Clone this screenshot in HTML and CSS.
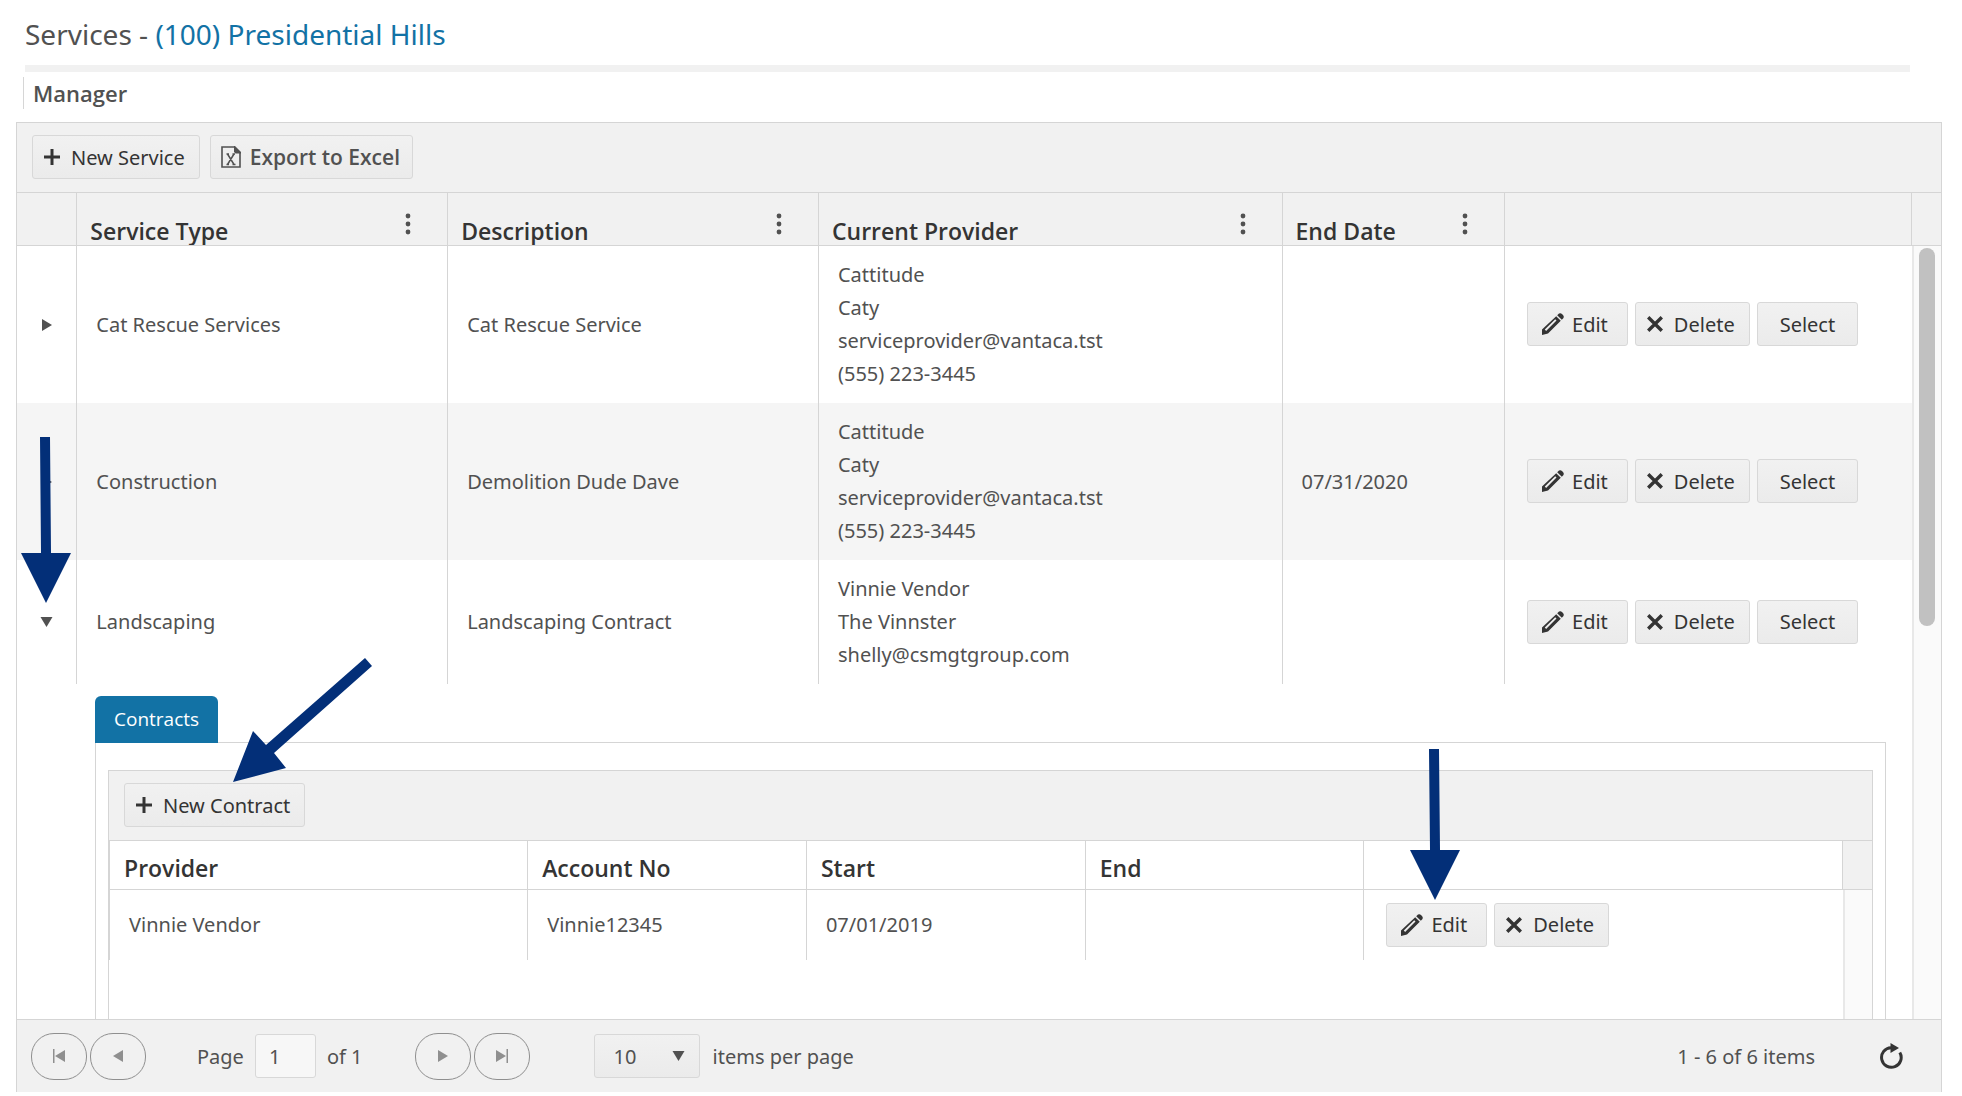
FILE: index.html
```html
<!DOCTYPE html>
<html lang="en">
<head>
  <meta charset="UTF-8">
  <meta name="viewport" content="width=device-width, initial-scale=1.0">
  <title>Services - (100) Presidential Hills</title>
  <link rel="stylesheet" href="styles.css">
</head>
<body>
  <!-- shared icons -->
  <svg class="sprite" aria-hidden="true">
    <symbol id="i-plus" viewBox="0 0 16 16"><path d="M6.5 0h3v6.5H16v3H9.5V16h-3V9.5H0v-3h6.5z"/></symbol>
    <symbol id="i-x" viewBox="0 0 16 16"><path d="M1.2 1.2 14.8 14.8M14.8 1.2 1.2 14.8" fill="none" stroke="currentColor" stroke-width="3.4"/></symbol>
    <symbol id="i-pencil" viewBox="0 0 22 22">
      <path fill-rule="evenodd" d="M14.2 3.2 18.8 7.800 6 20.500 0 22V16.500zM13.200 6.200 2.800 16.600l1.300 1.300L14.500 7.500z"/>
      <path d="M15.200 2.200 17 .600Q18.600-.5 20.200 1.200L21 2Q22.400 3.700 21.300 5.200L19.800 6.800z"/>
    </symbol>
    <symbol id="i-excel" viewBox="0 0 20 22">
      <path d="M13 1H1v20h18V7" fill="none" stroke="currentColor" stroke-width="1.600"/>
      <path d="M13 0h1l6 6v1.500h-5.500L13 6z"/>
      <path d="M6.500 8 13 18.500M13 8 6.500 18.500M5.500 8h2.500M11.500 8H14M5.500 18.500H8M11.500 18.500h3" fill="none" stroke="currentColor" stroke-width="1.500"/>
    </symbol>
    <symbol id="i-dots" viewBox="0 0 6 22"><circle cx="3" cy="3" r="2.400"/><circle cx="3" cy="11" r="2.400"/><circle cx="3" cy="19" r="2.400"/></symbol>
    <symbol id="i-right" viewBox="0 0 10 12"><path d="M0 0 10 6 0 12z"/></symbol>
    <symbol id="i-left" viewBox="0 0 10 12"><path d="M10 0 0 6 10 12z"/></symbol>
    <symbol id="i-down" viewBox="0 0 12 10"><path d="M0 0h12L6 10z"/></symbol>
    <symbol id="i-first" viewBox="0 0 12 14"><path d="M0 0h1.500v14H0zM12 1v12L2 7z"/></symbol>
    <symbol id="i-last" viewBox="0 0 12 14"><path d="M10.500 0H12v14h-1.500zM0 1v12l10-6z"/></symbol>
    <symbol id="i-refresh" viewBox="0 0 24 26">
      <path d="M20.800 9.500A9.800 9.800 0 1 1 12 4.700" fill="none" stroke="currentColor" stroke-width="3"/>
      <path d="M11.500 0 20 5l-8.500 5z"/>
    </symbol>
  </svg>

  <header class="page-header">
    <h1>Services - <a href="#">(100) Presidential Hills</a></h1>
  </header>
  <h2 class="section-title">Manager</h2>

  <main class="grid">
    <div class="toolbar">
      <button type="button" class="btn"><svg class="icon"><use href="#i-plus"/></svg>New Service</button>
      <button type="button" class="btn btn-export"><svg class="icon icon-excel"><use href="#i-excel"/></svg>Export to Excel</button>
    </div>

    <div class="grid-header">
      <table class="services">
        <colgroup><col class="w-arrow"><col class="w-type"><col class="w-desc"><col class="w-provider"><col class="w-date"><col class="w-cmd"></colgroup>
        <thead>
          <tr>
            <th></th>
            <th>Service Type<svg class="dots"><use href="#i-dots"/></svg></th>
            <th>Description<svg class="dots"><use href="#i-dots"/></svg></th>
            <th>Current Provider<svg class="dots"><use href="#i-dots"/></svg></th>
            <th>End Date<svg class="dots"><use href="#i-dots"/></svg></th>
            <th></th>
          </tr>
        </thead>
      </table>
    </div>

    <div class="grid-body">
      <div class="grid-scroll">
        <table class="services">
          <colgroup><col class="w-arrow"><col class="w-type"><col class="w-desc"><col class="w-provider"><col class="w-date"><col class="w-cmd"></colgroup>
          <tbody>
            <tr>
              <td class="toggle"><button type="button" aria-label="Expand"><svg class="tri"><use href="#i-right"/></svg></button></td>
              <td>Cat Rescue Services</td>
              <td>Cat Rescue Service</td>
              <td>Cattitude<br>Caty<br>serviceprovider@vantaca.tst<br>(555) 223-3445</td>
              <td></td>
              <td>
                <div class="commands">
                  <button type="button" class="btn btn-edit"><svg class="icon icon-pencil"><use href="#i-pencil"/></svg>Edit</button>
                  <button type="button" class="btn"><svg class="icon"><use href="#i-x"/></svg>Delete</button>
                  <button type="button" class="btn btn-select">Select</button>
                </div>
              </td>
            </tr>
            <tr class="alt">
              <td class="toggle"><button type="button" aria-label="Expand"><svg class="tri"><use href="#i-right"/></svg></button></td>
              <td>Construction</td>
              <td>Demolition Dude Dave</td>
              <td>Cattitude<br>Caty<br>serviceprovider@vantaca.tst<br>(555) 223-3445</td>
              <td>07/31/2020</td>
              <td>
                <div class="commands">
                  <button type="button" class="btn btn-edit"><svg class="icon icon-pencil"><use href="#i-pencil"/></svg>Edit</button>
                  <button type="button" class="btn"><svg class="icon"><use href="#i-x"/></svg>Delete</button>
                  <button type="button" class="btn btn-select">Select</button>
                </div>
              </td>
            </tr>
            <tr>
              <td class="toggle"><button type="button" aria-label="Collapse"><svg class="tri-down"><use href="#i-down"/></svg></button></td>
              <td>Landscaping</td>
              <td>Landscaping Contract</td>
              <td>Vinnie Vendor<br>The Vinnster<br>shelly@csmgtgroup.com</td>
              <td></td>
              <td>
                <div class="commands">
                  <button type="button" class="btn btn-edit"><svg class="icon icon-pencil"><use href="#i-pencil"/></svg>Edit</button>
                  <button type="button" class="btn"><svg class="icon"><use href="#i-x"/></svg>Delete</button>
                  <button type="button" class="btn btn-select">Select</button>
                </div>
              </td>
            </tr>
          </tbody>
        </table>

        <section class="detail">
          <button type="button" class="tab">Contracts</button>
          <div class="tab-content">
            <div class="subgrid">
              <div class="toolbar">
                <button type="button" class="btn"><svg class="icon"><use href="#i-plus"/></svg>New Contract</button>
              </div>
              <div class="subgrid-header">
                <table class="contracts">
                  <colgroup><col class="c-provider"><col class="c-field"><col class="c-field"><col class="c-field"><col class="c-cmd"></colgroup>
                  <thead>
                    <tr><th>Provider</th><th>Account No</th><th>Start</th><th>End</th><th></th></tr>
                  </thead>
                </table>
              </div>
              <div class="subgrid-body">
                <div class="subgrid-scroll">
                  <table class="contracts">
                    <colgroup><col class="c-provider"><col class="c-field"><col class="c-field"><col class="c-field"><col class="c-cmd"></colgroup>
                    <tbody>
                      <tr>
                        <td>Vinnie Vendor</td>
                        <td>Vinnie12345</td>
                        <td>07/01/2019</td>
                        <td></td>
                        <td>
                          <div class="commands">
                            <button type="button" class="btn btn-edit"><svg class="icon icon-pencil"><use href="#i-pencil"/></svg>Edit</button>
                            <button type="button" class="btn"><svg class="icon"><use href="#i-x"/></svg>Delete</button>
                          </div>
                        </td>
                      </tr>
                    </tbody>
                  </table>
                </div>
                <div class="track"></div>
              </div>
            </div>
          </div>
        </section>
      </div>
      <div class="track"><div class="thumb"></div></div>
    </div>

    <div class="pager">
      <div class="pager-nav">
        <button type="button" aria-label="First page"><svg class="nav-end"><use href="#i-first"/></svg></button>
        <button type="button" aria-label="Previous page"><svg class="tri"><use href="#i-left"/></svg></button>
      </div>
      <label class="pager-page">Page <input type="text" value="1"> of 1</label>
      <div class="pager-nav">
        <button type="button" aria-label="Next page"><svg class="tri"><use href="#i-right"/></svg></button>
        <button type="button" aria-label="Last page"><svg class="nav-end"><use href="#i-last"/></svg></button>
      </div>
      <label class="pager-size">
        <span class="select-wrap">
          <select><option>10</option><option>20</option><option>50</option></select>
          <svg class="tri-down"><use href="#i-down"/></svg>
        </span>
        items per page
      </label>
      <span class="pager-info">1 - 6 of 6 items</span>
      <button type="button" class="refresh" aria-label="Refresh"><svg><use href="#i-refresh"/></svg></button>
    </div>
  </main>

  <!-- callout arrows over the grid -->
  <svg class="callout callout-expand" viewBox="0 0 50 166"><path d="M19 0h10l1 116h20L25 166 0 116h20z"/></svg>
  <svg class="callout callout-new" viewBox="0 0 140 124"><path d="M132 0l7 8-98 87 12 15L0 124 20 73l13 14z"/></svg>
  <svg class="callout callout-edit" viewBox="0 0 50 151"><path d="M19 0h10l1 101h20L25 151 0 101h20z"/></svg>
</body>
</html>
```
FILE: styles.css
```css
* {
  box-sizing: border-box;
}
body {
  font-family: 'Noto Sans', 'Open Sans', sans-serif;
  font-size: 20px;
  line-height: 33px;
  margin: 0;
  padding: 0 20px 4px 16px;
  height: 100vh;
  display: flex;
  flex-direction: column;
  background: #fff;
  color: #515151;
  position: relative;
}
svg {
  display: block;
  flex: none;
  fill: currentColor;
}
.sprite {
  display: none;
}
button, input, select {
  font: inherit;
  color: inherit;
}

/* page heading */
.page-header {
  margin: 0 32px 0 9px;
  padding: 14px 0 11px;
  border-bottom: 7px solid #f1f1f1;
}
h1 {
  margin: 0;
  font-size: 28px;
  line-height: 40px;
  font-weight: 400;
}
h1 a {
  color: #1272a5;
  text-decoration: none;
}
.section-title, .btn-export, .tab, th {
  font-family: 'Open Sans', 'Noto Sans', sans-serif;
  font-weight: 600;
}
.section-title {
  margin: 5px 0 13px 7px;
  padding-left: 9px;
  border-left: 1px solid #d6d6d6;
  font-size: 22px;
  line-height: 32px;
}

/* grid */
.grid {
  flex: 1;
  min-height: 0;
  display: flex;
  flex-direction: column;
  border: 1px solid #d5d5d5;
  border-bottom: 0;
}
.toolbar {
  display: flex;
  gap: 10px;
  padding: 12px 15px 13px;
  background: #f1f1f1;
  border-bottom: 1px solid #d5d5d5;
}
.btn {
  display: flex;
  align-items: center;
  justify-content: center;
  gap: 11px;
  height: 44px;
  padding: 0 14px 0 11px;
  border: 1px solid #d8d8d8;
  border-radius: 3px;
  background: linear-gradient(#f1f1f1, #ebebeb);
  color: #343434;
  white-space: nowrap;
}
.btn-export {
  gap: 9px;
  padding: 0 12px 0 10px;
  font-size: 21px;
  color: #515151;
}
.btn-edit {
  gap: 8px;
  padding: 0 19px 0 14px;
}
.btn-select {
  padding: 0 22px;
}
.icon {
  width: 16px;
  height: 16px;
}
.icon-pencil {
  width: 22px;
  height: 22px;
}
.icon-excel {
  width: 20px;
  height: 22px;
}
table {
  width: 100%;
  table-layout: fixed;
  border-collapse: separate;
  border-spacing: 0;
}
th, td {
  border-left: 1px solid #d5d5d5;
  text-align: left;
}
th {
  font-size: 23px;
  color: #343434;
}
td {
  padding: 12px 18px 13px 19px;
}
.services tr > :first-child {
  border-left: 0;
}
.w-arrow { width: 32px; }
.w-type, .w-desc { width: 200px; }
.w-provider { width: 250px; }
.w-date { width: 120px; }
.w-cmd { width: 220px; }

.grid-header {
  flex: none;
  height: 53px;
  overflow: hidden;
  padding-right: 29px;
  background: #f1f1f1;
  border-bottom: 1px solid #d5d5d5;
}
.grid-header th {
  position: relative;
  height: 55px;
  padding: 22px 13px 0;
}
.grid-header th:last-child {
  border-right: 1px solid #d5d5d5;
}
.dots {
  position: absolute;
  top: 20px;
  right: 36px;
  width: 6px;
  height: 22px;
  color: #515151;
}
.grid-body {
  flex: 1;
  min-height: 0;
  display: flex;
}
.grid-scroll {
  flex: 1;
  min-width: 0;
  overflow: hidden;
}
.alt {
  background: #f5f5f5;
}
.services td:last-child {
  padding-left: 22px;
}
.services .toggle {
  padding: 0;
}
.toggle button {
  display: flex;
  margin: 0 auto;
  padding: 0;
  border: 0;
  background: none;
}
.tri {
  width: 10px;
  height: 14px;
}
.tri-down {
  width: 13px;
  height: 10px;
}
.commands {
  display: flex;
  gap: 7px;
}
.track {
  flex: none;
  width: 29px;
  padding: 2px 6px 0 5px;
  background: #fafafa;
  border-left: 2px solid #e8e8e8;
}
.thumb {
  height: 49%;
  border-radius: 8px;
  background: #c1c1c1;
}

/* contracts detail */
.detail {
  padding: 12px 26px 0 78px;
}
.tab {
  display: block;
  height: 47px;
  margin: 0 0 -1px;
  padding: 0 19px;
  position: relative;
  border: 0;
  border-radius: 6px 6px 0 0;
  background: #1272a5;
  color: #fff;
  font-size: 19px;
  font-weight: 500;
}
.tab-content {
  padding: 27px 12px 12px;
  border: 1px solid #d5d5d5;
}
.subgrid {
  border: 1px solid #d5d5d5;
}
.subgrid-header {
  padding-right: 29px;
  background: #f1f1f1;
  border-bottom: 1px solid #d5d5d5;
}
.subgrid-header th {
  height: 48px;
  padding: 6px 14px 0;
  background: #fff;
}
.subgrid-header th:last-child {
  border-right: 1px solid #d5d5d5;
}
.subgrid-body {
  display: flex;
  height: 250px;
}
.subgrid-scroll {
  flex: 1;
}
.contracts td {
  height: 70px;
}
.contracts td:last-child {
  padding-left: 22px;
}
.c-provider { width: 150px; }
.c-field { width: 100px; }
.c-cmd { width: 172px; }

/* pager */
.pager {
  flex: none;
  display: flex;
  align-items: center;
  height: 73px;
  padding: 0 38px 0 14px;
  background: #f1f1f1;
  border-top: 1px solid #d5d5d5;
}
.pager-nav {
  display: flex;
  gap: 3px;
}
.pager-nav button {
  display: flex;
  align-items: center;
  justify-content: center;
  width: 56px;
  height: 47px;
  padding: 0;
  border: 1px solid #8f8f8f;
  border-radius: 23px;
  background: none;
  color: #8f8f8f;
}
.nav-end {
  width: 12px;
  height: 14px;
}
.pager-page {
  display: flex;
  align-items: center;
  gap: 11px;
  margin: 0 52px 0 51px;
}
.pager-page input {
  width: 61px;
  height: 44px;
  padding: 0 13px;
  border: 1px solid #d8d8d8;
  border-radius: 3px;
  background: #f7f7f7;
}
.pager-size {
  display: flex;
  align-items: center;
  gap: 13px;
  margin-left: 64px;
}
.select-wrap {
  position: relative;
}
.select-wrap select {
  display: block;
  appearance: none;
  width: 106px;
  height: 44px;
  padding: 0 19px;
  border: 1px solid #d8d8d8;
  border-radius: 3px;
  background: linear-gradient(#f1f1f1, #ebebeb);
}
.select-wrap svg {
  position: absolute;
  top: 17px;
  right: 15px;
  pointer-events: none;
}
.pager-info {
  margin-left: auto;
}
.refresh {
  margin-left: 64px;
  padding: 0;
  border: 0;
  background: none;
  color: #343434;
}
.refresh svg {
  width: 24px;
  height: 26px;
}

/* callouts */
.callout {
  position: absolute;
  color: #032f78;
}
.callout-expand {
  left: 21px;
  top: 437px;
  width: 50px;
  height: 166px;
}
.callout-new {
  left: 233px;
  top: 658px;
  width: 140px;
  height: 124px;
}
.callout-edit {
  left: 1410px;
  top: 749px;
  width: 50px;
  height: 151px;
}
```
